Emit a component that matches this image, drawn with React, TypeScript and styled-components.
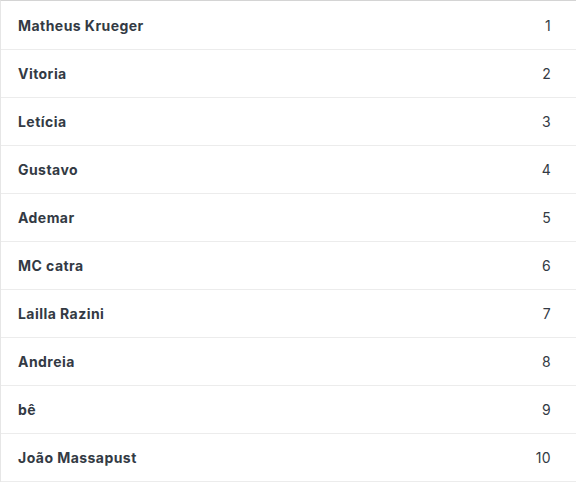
import React from "react";
import styled, { createGlobalStyle } from "styled-components";

const Global = createGlobalStyle`
  html, body { margin: 0; padding: 0; background: #fff; }
  body { font-family: "Inter", "Open Sans", sans-serif; }
`;

const List = styled.div`
  width: 576px;
  border-top: 1px solid #d4d4d4;
  border-left: 1px solid #e6e6e6;
  padding-top: 1px;
  box-sizing: border-box;
`;

const Row = styled.div`
  display: flex;
  align-items: center;
  justify-content: space-between;
  height: 48px;
  box-sizing: border-box;
  border-bottom: 1px solid #ececec;
  padding: 0 25px 0 17px;
`;

const Name = styled.span`
  font-size: 14px;
  font-weight: 700;
  color: #333a44;
  letter-spacing: 0.45px;
`;

const Rank = styled.span`
  font-size: 14px;
  font-weight: 400;
  color: #333a44;
  letter-spacing: 0.3px;
`;

const people = [
  "Matheus Krueger",
  "Vitoria",
  "Letícia",
  "Gustavo",
  "Ademar",
  "MC catra",
  "Lailla Razini",
  "Andreia",
  "bê",
  "João Massapust",
];

export default function App() {
  return (
    <>
      <Global />
      <List>
        {people.map((p, i) => (
          <Row key={p}>
            <Name>{p}</Name>
            <Rank>{i + 1}</Rank>
          </Row>
        ))}
      </List>
    </>
  );
}
